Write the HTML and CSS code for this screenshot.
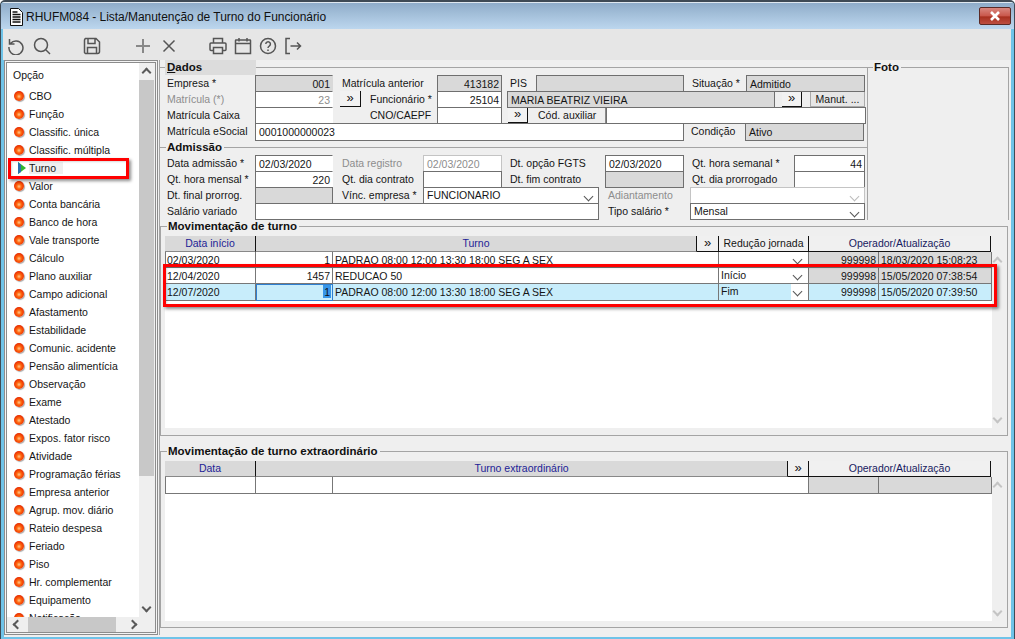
FILE: index.html
```html
<!DOCTYPE html>
<html lang="pt-BR">
<head>
<meta charset="utf-8">
<title>RHUFM084</title>
<link rel="stylesheet" href="styles.css">
</head>
<body>
<div class="window">
  <header class="titlebar">
    <svg class="doc" width="16" height="18" viewBox="0 0 16 18"><path d="M2.5 .5h8l4 4v13h-12z" fill="#fff" stroke="#111"/><path d="M4.5 4h5M4.5 6.5h8M4.5 9h8M4.5 11.500h8M4.500 14h8" stroke="#111" stroke-width="1.500"/></svg>
    <span class="title">RHUFM084 - Lista/Manutenção de Turno do Funcionário</span>
    <div class="close"><svg width="14" height="10" viewBox="0 0 14 10"><path d="M3 1l8 8M11 1l-8 8" stroke="#fff" stroke-width="2.600"/></svg></div>
  </header>
  <nav class="toolbar">
    <svg class="ic" width="18" height="18" viewBox="0 0 18 18"><path d="M3.500 6.500A7 7 0 1 1 2 10M2.500 2v5h5" /></svg>
    <svg class="ic m10" width="18" height="18" viewBox="0 0 18 18"><circle cx="8" cy="8" r="6.500"/><path d="M13 13l4 4"/></svg>
    <svg class="ic m32" width="18" height="18" viewBox="0 0 18 18"><path d="M2.500 1.500h10.500l3.500 3.500v9.500a2 2 0 0 1-2 2h-12a2 2 0 0 1-1-1V3.500a2 2 0 0 1 1-2zM5 1.500v5h7v-5M4.500 16.500v-6h9v6"/></svg>
    <svg class="ic m33" width="18" height="18" viewBox="0 0 18 18"><path class="lt" d="M9 2v14M2 9h14"/></svg>
    <svg class="ic m8" width="18" height="18" viewBox="0 0 18 18"><path d="M3.500 3.500l11 11M14.500 3.500l-11 11"/></svg>
    <svg class="ic m34" width="18" height="18" viewBox="0 0 18 18"><path d="M4.500 6V1.500h9V6M4.500 13.500H2a1 1 0 0 1-1-1V7a1 1 0 0 1 1-1h14a1 1 0 0 1 1 1v5.500a1 1 0 0 1-1 1h-2.500M4.500 10.500h9v6h-9z"/></svg>
    <svg class="ic m7" width="18" height="18" viewBox="0 0 18 18"><path d="M2 3h14a.5.5 0 0 1 .5.500v13h-15v-13A.5.5 0 0 1 2 3zM1.500 6.500h15M5 1v3.500M13 1v3.500"/></svg>
    <svg class="ic m7" width="18" height="18" viewBox="0 0 18 18"><circle cx="9" cy="9" r="7.500"/><path d="M6.800 7a2.300 2.300 0 1 1 3.500 2c-.9.600-1.300 1-1.300 2"/><path d="M9 12.500v1.500"/></svg>
    <svg class="ic m7" width="18" height="18" viewBox="0 0 18 18"><path d="M6 1.500H2v15h4M6.500 9h10M13 5.500L16.500 9 13 12.500"/></svg>
  </nav>
  <div class="content">
    <aside class="side">
      <div class="side-inner">
        <div class="side-top">
          <ul class="list">
            <li class="head">Opção</li>
            <li class="it"><i class="ball"></i>CBO</li>
            <li class="it"><i class="ball"></i>Função</li>
            <li class="it"><i class="ball"></i>Classific. única</li>
            <li class="it"><i class="ball"></i>Classific. múltipla</li>
            <li class="it"><svg class="play" width="10" height="12" viewBox="0 0 10 12"><path d="M1 0l8 6-8 6z" fill="#2fb52f"/><path d="M1 0v12l3-2V3z" fill="#2a6fb0"/></svg><span class="cur">Turno</span></li>
            <li class="it"><i class="ball"></i>Valor</li>
            <li class="it"><i class="ball"></i>Conta bancária</li>
            <li class="it"><i class="ball"></i>Banco de hora</li>
            <li class="it"><i class="ball"></i>Vale transporte</li>
            <li class="it"><i class="ball"></i>Cálculo</li>
            <li class="it"><i class="ball"></i>Plano auxiliar</li>
            <li class="it"><i class="ball"></i>Campo adicional</li>
            <li class="it"><i class="ball"></i>Afastamento</li>
            <li class="it"><i class="ball"></i>Estabilidade</li>
            <li class="it"><i class="ball"></i>Comunic. acidente</li>
            <li class="it"><i class="ball"></i>Pensão alimentícia</li>
            <li class="it"><i class="ball"></i>Observação</li>
            <li class="it"><i class="ball"></i>Exame</li>
            <li class="it"><i class="ball"></i>Atestado</li>
            <li class="it"><i class="ball"></i>Expos. fator risco</li>
            <li class="it"><i class="ball"></i>Atividade</li>
            <li class="it"><i class="ball"></i>Programação férias</li>
            <li class="it"><i class="ball"></i>Empresa anterior</li>
            <li class="it"><i class="ball"></i>Agrup. mov. diário</li>
            <li class="it"><i class="ball"></i>Rateio despesa</li>
            <li class="it"><i class="ball"></i>Feriado</li>
            <li class="it"><i class="ball"></i>Piso</li>
            <li class="it"><i class="ball"></i>Hr. complementar</li>
            <li class="it"><i class="ball"></i>Equipamento</li>
            <li class="it"><i class="ball"></i>Notificação</li>
          </ul>
          <div class="vbar">
            <b class="chev up dk top8"></b>
            <div class="thumb"></div>
            <b class="chev down dk bot"></b>
          </div>
        </div>
        <div class="hbar">
          <b class="chev left dk"></b>
          <div class="hthumb"></div>
          <b class="chev right dk"></b>
        </div>
      </div>
    </aside>
    <main class="main">
      <div class="upper">
        <div class="forms">
          <section class="sec first">
            <div class="legend dados"><u>D</u>ados</div>
            <div class="row">
              <span class="lbl w88">Empresa *</span><span class="f ro r nor w78">001</span>
              <span class="lbl ml9 w95">Matrícula anterior</span><span class="f ro r w65">413182</span>
              <span class="lbl ml8 w26">PIS</span><span class="f ro w148"></span>
              <span class="lbl ml8 w54">Situação *</span><span class="f ro w119">Admitido</span>
            </div>
            <div class="row">
              <span class="lbl dis w88">Matrícula (*)</span><span class="f r dt nor w78">23</span>
              <span class="btn ml7 w21">»</span>
              <span class="lbl ml9 w67">Funcionário *</span><span class="f r w65">25104</span>
              <span class="f ro ml5 w268">MARIA BEATRIZ VIEIRA</span>
              <span class="btn ml7 w20">»</span>
              <span class="btn2 ml8 w55">Manut. ...</span>
            </div>
            <div class="row">
              <span class="lbl w88">Matrícula Caixa</span><span class="f nor w78"></span>
              <span class="lbl ml37 w67">CNO/CAEPF</span><span class="f w65"></span>
              <span class="btn ml6 w20">»</span>
              <span class="btn3 w78">Cód. auxiliar</span>
              <span class="f w260"></span>
            </div>
            <div class="row tall">
              <span class="lbl w88">Matrícula eSocial</span><span class="f w429 ft">0001000000023</span>
              <span class="lbl ml7 w54">Condição</span><span class="f ro w119 ft">Ativo</span>
            </div>
          </section>
          <section class="sec second">
            <div class="legend">Admissão</div>
            <div class="row">
              <span class="lbl w88">Data admissão *</span><span class="f nor w78">02/03/2020</span>
              <span class="lbl dis ml9 w81">Data registro</span><span class="f fl dt w79">02/03/2020</span>
              <span class="lbl ml8 w95">Dt. opção FGTS</span><span class="f w79">02/03/2020</span>
              <span class="lbl ml8 w102">Qt. hora semanal *</span><span class="f r w71">44</span>
            </div>
            <div class="row">
              <span class="lbl w88">Qt. hora mensal *</span><span class="f r nor w78">220</span>
              <span class="lbl ml9 w81">Qt. dia contrato</span><span class="f w79"></span>
              <span class="lbl ml8 w95">Dt. fim contrato</span><span class="f ro w79"></span>
              <span class="lbl ml8 w102">Qt. dia prorrogado</span><span class="f w71"></span>
            </div>
            <div class="row">
              <span class="lbl w88">Dt. final prorrog.</span><span class="f ro w78"></span>
              <span class="lbl ml9 w81">Vínc. empresa *</span><span class="f sel up1 w176">FUNCIONARIO</span>
              <span class="lbl dis ml9 w82">Adiantamento</span><span class="f sel fl w175"></span>
            </div>
            <div class="row">
              <span class="lbl w88">Salário variado</span><span class="f w344"></span>
              <span class="lbl ml9 w82">Tipo salário *</span><span class="f sel up1 w175">Mensal</span>
            </div>
          </section>
        </div>
        <section class="foto">
          <div class="legend">Foto</div>
        </section>
      </div>

      <section class="group g1">
        <div class="legend">Movimentação de turno</div>
        <div class="gwrap">
          <div class="gbody h192">
            <div class="ghead">
              <div class="hc hg hw91 blue">Data início</div>
              <div class="hc hg hw441 blue">Turno</div>
              <div class="hc hw22 dbl">»</div>
              <div class="hc hw90">Redução jornada</div>
              <div class="hc hw182 navy">Operador/Atualização</div>
            </div>
            <div class="grow">
              <div class="c cw91">02/03/2020</div>
              <div class="c cw77 r">1</div>
              <div class="c cw386">PADRAO 08:00 12:00 13:30 18:00 SEG A SEX</div>
              <div class="c cw90 sel"></div>
              <div class="c cw70 r ro">999998</div>
              <div class="c cw113 ro">18/03/2020 15:08:23</div>
            </div>
            <div class="grow">
              <div class="c cw91">12/04/2020</div>
              <div class="c cw77 r">1457</div>
              <div class="c cw386">REDUCAO 50</div>
              <div class="c cw90 sel">Início</div>
              <div class="c cw70 r ro">999998</div>
              <div class="c cw113 ro">15/05/2020 07:38:54</div>
            </div>
            <div class="grow on">
              <div class="c cw91">12/07/2020</div>
              <div class="c cw77 r act"><span class="hl">1</span></div>
              <div class="c cw386">PADRAO 08:00 12:00 13:30 18:00 SEG A SEX</div>
              <div class="c cw90 sel wht"><span class="fim">Fim</span></div>
              <div class="c cw70 r">999998</div>
              <div class="c cw113">15/05/2020 07:39:50</div>
            </div>
          </div>
          <div class="gbar">
            <b class="chev up lt"></b>
            <b class="chev down lt"></b>
          </div>
        </div>
      </section>

      <section class="group g2">
        <div class="legend">Movimentação de turno extraordinário</div>
        <div class="gwrap">
          <div class="gbody h160">
            <div class="ghead">
              <div class="hc hg hw91 blue">Data</div>
              <div class="hc hg hw532 blue">Turno extraordinário</div>
              <div class="hc hw21 dbl">»</div>
              <div class="hc hw182 navy">Operador/Atualização</div>
            </div>
            <div class="grow">
              <div class="c cw91"></div>
              <div class="c cw77"></div>
              <div class="c cw476"></div>
              <div class="c cw70 ro"></div>
              <div class="c cw113 ro"></div>
            </div>
          </div>
          <div class="gbar">
            <b class="chev up lt"></b>
            <b class="chev down lt"></b>
          </div>
        </div>
      </section>
    </main>
  </div>
  <div class="mark mark-a"></div>
  <div class="mark mark-b"></div>
</div>
</body>
</html>
```
FILE: styles.css
```css
*{box-sizing:border-box}
html,body{margin:0;padding:0}
body{width:1015px;height:639px;overflow:hidden;font-family:"Liberation Sans",Arial,sans-serif;font-size:10.5px;color:#151515}
.window{position:relative;width:1015px;height:639px;overflow:hidden;display:flex;flex-direction:column;background:#6fc3e8;border:solid #3f4a55;border-width:2px 1px 0 1px;border-radius:5px 5px 0 0;padding-bottom:2px}
.titlebar{height:27px;flex:none;display:flex;align-items:center;padding:0 4px 0 5px;background:linear-gradient(#8facc9,#a6c2dc 50%,#bcd6ee);border-top:1px solid #dfe8f0}
.doc{margin:2px 0 0 2px;flex:none}
.title{margin:2px 0 0 2px;font-size:12px;letter-spacing:-.04px;color:#111;flex:1}
.close{width:32px;height:18px;margin-right:-1px;display:flex;align-items:center;justify-content:center;background:linear-gradient(#d9877f,#c9574b 50%,#a8301f 55%,#bd4f42);border:1px solid #5b2a26;border-radius:2px}
.toolbar{height:31px;flex:none;display:flex;align-items:center;margin:0 3px 0 2px;padding:3px 0 0 4px;background:#e6e6e6}
.ic{flex:none;fill:none;stroke:#555;stroke-width:1.5}
.ic .lt{stroke:#888;stroke-width:2}
.m10{margin-left:8px}.m32{margin-left:32px}.m33{margin-left:33px}.m8{margin-left:8px}.m34{margin-left:31px}.m7{margin-left:7px}
.content{flex:1;display:flex;margin:0 3px 0 3px;background:#efefef;min-height:0;padding-bottom:2px}
.side{width:154px;flex:none;padding:1px;border:1px solid #8c8c8c;background:#f4f4f4;height:575px}
.side-inner{height:100%;border:1px solid #8c8c8c;display:flex;flex-direction:column;background:#efefef}
.side-top{display:flex;height:554px;flex:none}
.list{width:132px;flex:none;margin:0;padding:0;list-style:none;background:#fff;overflow:hidden}
.head{height:24px;padding:4px 0 0 6px;line-height:16px}
.it{height:18px;display:flex;align-items:center;padding-left:7px;white-space:nowrap}
.ball{width:10px;height:10px;flex:none;margin-right:5px;border-radius:50%;background:radial-gradient(circle at 50% 55%,#ffc890 0,#ff6a10 30%,#e82c00 70%,#b83a10);box-shadow:1px 1px 1px #aaa}
.play{flex:none;margin:0 2px 0 3px}
.cur{background:#efefef;width:34px}
.vbar{width:15px;flex:none;display:flex;flex-direction:column;align-items:center;background:#efefef}
.thumb{width:15px;height:396px;margin-top:4px;background:#c8c8c8;flex:none}
.chev{display:block;width:7px;height:7px;flex:none;transform:rotate(45deg);border:solid #666;border-width:2px 0 0 2px}
.chev.down{transform:rotate(225deg)}
.chev.left{transform:rotate(-45deg)}
.chev.right{transform:rotate(135deg)}
.chev.dk{border-color:#5a5a5a}
.chev.lt{border-color:#c4c4c4}
.top8{margin-top:6px}
.bot{margin-top:auto;margin-bottom:6px}
.hbar{height:16px;width:132px;display:flex;align-items:center;padding-left:7px}
.hthumb{width:88px;height:15px;margin:0 13px 0 7px;background:#c8c8c8}
.main{flex:1;min-width:0;margin-left:1px;border-left:1px solid #a4a4a4}
.upper{display:flex;height:160px}
.forms{width:707px;flex:none}
.sec{border-top:1px solid #a4a4a4}
.first{margin-top:7px}
.second{margin-top:6px}
.legend{font-weight:700;font-size:11.5px;line-height:13px;height:14px;margin:-7px 0 0 6px;padding:0 2px 0 1px;width:max-content;background:#efefef;color:#111}
.dados{width:91px;height:15px;margin:-8px 0 0 5px;padding:0 0 0 2px;background:#dcdcdc;line-height:14px}
.row{display:flex;height:16px;padding-left:7px;white-space:nowrap}
.tall{height:18px}
.lbl{flex:none;line-height:16px;display:block}
.lbl.dis,.dt{color:#8d8d8d}
.f{flex:none;display:block;height:17px;border:1px solid #6f6f6f;background:#fff;padding:0 3px;line-height:16px;overflow:hidden;position:relative;z-index:0}
.ft{height:18px;line-height:17px}
.f.ro{background:#d9d9d9}
.r{text-align:right}
.f.r{padding-right:2px}
.nor{border-right-color:transparent}
.fl{border-color:#c4c4c4}
.sel{position:relative;padding-right:14px}
.f.sel{height:17px;overflow:visible}
.up1{line-height:14px}
.sel::after{content:"";position:absolute;right:6px;top:5px;width:6px;height:6px;transform:rotate(45deg);border:solid #555;border-width:0 1px 1px 0}
.fl.sel::after{border-color:#bbb}
.btn{flex:none;display:block;height:16px;text-align:center;background:#f2f2f2;border:solid #111;border-width:0 1px 1px 0;font-size:13px;line-height:13px}
.btn2{flex:none;display:block;height:16px;text-align:center;background:#e6e6e6;border:1px solid #aaa;line-height:15px}
.btn3{flex:none;display:block;height:16px;padding-left:10px;background:#efefef;border:solid #8a8a8a;border-width:0 1px 0 0;line-height:16px}
.w20{width:20px}.w21{width:21px}.w26{width:26px}.w54{width:54px}.w55{width:55px}.w65{width:65px}.w67{width:67px}.w71{width:71px}.w78{width:78px}.w79{width:79px}.w81{width:81px}.w82{width:82px}.w88{width:88px}.w95{width:95px}.w102{width:102px}.w119{width:119px}.w148{width:148px}.w175{width:175px}.w176{width:176px}.w260{width:260px}.w268{width:268px}.w344{width:344px}.w429{width:429px}
.ml5{margin-left:5px}.ml6{margin-left:6px}.ml7{margin-left:7px}.ml8{margin-left:8px}.ml9{margin-left:9px}.ml37{margin-left:37px}
.foto{flex:1;margin:7px 2px 0 0;border:1px solid #a4a4a4;border-bottom:0}
.foto .legend{margin-left:5px;margin-top:-7px}
.group{width:848px;border:1px solid #a4a4a4}
.g1{margin-top:6px;height:210px}
.g2{margin-top:15px;height:177px}
.g1 .legend,.g2 .legend{margin-top:-7px}
.gwrap{display:flex;margin:2px 0 0 4px}
.gbody{width:827px;flex:none;background:#fff}
.h192{height:192px}
.h160{height:160px}
.ghead{display:flex;height:16px;background:#efefef}
.hc{flex:none;height:16px;text-align:center;line-height:15px;background:#f0f0f0;border:solid #111;border-width:0 1px 1px 0}
.hg{background:#d9d9d9;border-bottom-color:#888}
.blue{color:#1d1d96}
.navy{color:#17205f}
.dbl{font-size:13px;line-height:13px}
.hw91{width:91px}.hw90{width:90px}.hw441{width:441px}.hw22{width:22px}.hw182{width:182px}.hw532{width:532px}.hw21{width:21px}
.grow{display:flex;height:16px}
.grow:last-child{height:17px}
.grow.on{background:#c8edfb}
.c{flex:none;height:100%;border:solid #777;border-width:0 1px 1px 0;padding:0 2px;line-height:17px;overflow:hidden;white-space:nowrap}
.grow .c:first-child{border-left:1px solid #777;padding-left:1px}
.c.ro{background:#d9d9d9}
.cw91{width:91px}.cw90{width:90px}.cw77{width:77px}.cw386{width:386px}.cw70{width:70px}.cw113{width:113px}.cw476{width:476px}
.c.sel{overflow:visible;padding-right:2px;line-height:14px}
.c.sel::after{right:7px;top:4px}
.wht{background:#fff;padding:0}
.fim{display:block;width:72px;height:100%;background:#c8edfb;padding-left:2px}
.act{border:1px solid #2f7fd0;padding:0 1px 0 0;line-height:14px}
.hl{background:#3796e8;color:#111;padding:0 1px;display:inline-block;height:13px}
.gbar{width:16px;flex:none;display:flex;flex-direction:column;align-items:center;justify-content:space-between;padding:22px 6px 6px 0}
.mark{position:absolute;border:3px solid #f00;box-shadow:2px 2px 3px rgba(0,0,0,.45),inset 1px 1px 2px rgba(0,0,0,.15);pointer-events:none}
.mark-a{left:7px;top:156px;width:121px;height:21px}
.mark-b{left:162px;top:262px;width:834px;height:43px}
```
